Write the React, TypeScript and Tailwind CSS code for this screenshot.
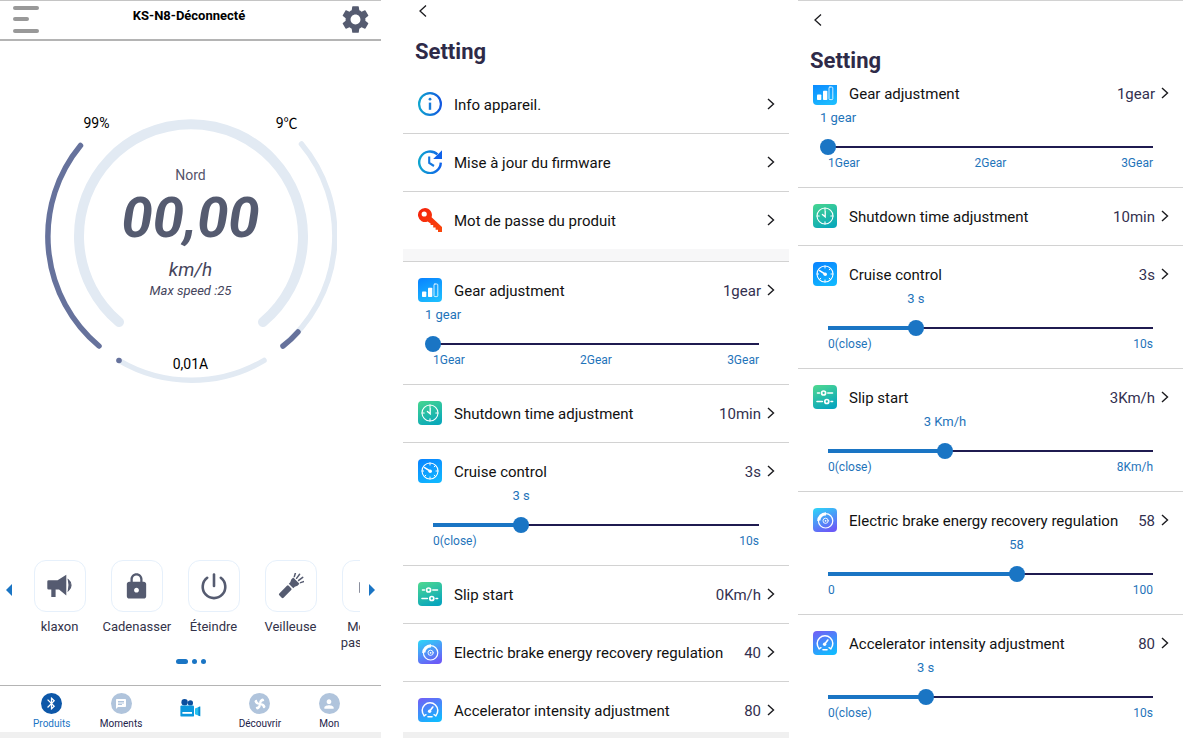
import { useState } from "react";
import type { ReactNode } from "react";
import { MdBluetooth, MdChat, MdLock, MdPerson, MdSettings } from "react-icons/md";

interface SliderInfo {
    label: string;
    level: number;
    marks: string[];
}

interface Setting {
    name: string;
    icon: ReactNode;
    value?: string;
    slider?: SliderInfo;
}

/* ---------- icons ---------- */

interface TileProps {
    id: string;
    from: string;
    to: string;
    children: ReactNode;
}

function Tile({ id, from, to, children }: TileProps) {
    return (
        <svg viewBox="0 0 24 24" className="h-6 w-6" fill="none" stroke="white" strokeLinecap="round">
            <defs>
                <linearGradient id={id} x1="0.2" y1="0" x2="0.6" y2="1">
                    <stop offset="0" stopColor={from} />
                    <stop offset="1" stopColor={to} />
                </linearGradient>
            </defs>
            <rect width="24" height="24" rx="4" fill={`url(#${id})`} stroke="none" />
            {children}
        </svg>
    );
}

const GearTile = () => (
    <Tile id="gear" from="#0a86ff" to="#1cbcff">
        <rect x="4" y="13.5" width="4.3" height="5.5" rx="0.8" fill="white" stroke="none" />
        <rect x="10" y="9.7" width="4.3" height="9.3" rx="0.8" fill="white" stroke="none" />
        <rect x="16" y="6" width="3.8" height="12.6" rx="0.9" strokeWidth="0.8" />
    </Tile>
);

const ClockTile = () => (
    <Tile id="clock" from="#43d392" to="#0aa9b9">
        <circle cx="12" cy="12" r="8" strokeWidth="1.1" />
        <path d="M12 4v2.2M12 17.8V20M4 12h2.2M17.8 12H20" strokeWidth="1.1" />
        <path d="M12.2 7.2v5.6L9.4 10.4" strokeWidth="1.3" />
    </Tile>
);

const CruiseTile = () => (
    <Tile id="cruise" from="#0a86ff" to="#10b6ff">
        <circle cx="12" cy="12" r="8" strokeWidth="1.1" />
        <path d="M12 4v2M12 18v2M4 12h1.6M18 12h2M6.5 17.5l1.3-1.3M17.5 17.5l-1.3-1.3M17.5 6.5l-1.3 1.3" strokeWidth="1" />
        <path d="M12 12L6.6 8.6" strokeWidth="1.5" />
        <circle cx="12.2" cy="12.2" r="1.8" fill="white" stroke="none" />
    </Tile>
);

const SlipTile = () => (
    <Tile id="slip" from="#4bd692" to="#08a6bd">
        <path d="M4.5 8h2M14.8 8h4.7M4 16.5h5.4M18 16.5h1.6" strokeWidth="1.6" />
        <circle cx="10.6" cy="8" r="2" strokeWidth="1.7" />
        <circle cx="13.8" cy="16.5" r="2" strokeWidth="1.7" />
    </Tile>
);

const BrakeTile = () => (
    <Tile id="brake" from="#30d0f8" to="#6b5bf7">
        <circle cx="12.6" cy="12.8" r="7.2" strokeWidth="1.2" />
        <circle cx="12.6" cy="12.8" r="2.6" strokeWidth="0.9" />
        <circle cx="12.6" cy="12.8" r="0.9" fill="white" stroke="none" />
        <path d="M4.2 13A8.6 8.6 0 0 1 13 4.2V7.6A5.2 5.2 0 0 0 7.4 12.4z" fill="white" stroke="none" />
    </Tile>
);

const AccelTile = () => (
    <Tile id="accel" from="#6f62f6" to="#12b9ff">
        <path d="M6.2 17.8A7.8 7.8 0 1 1 17.8 17.8" strokeWidth="1.5" />
        <path d="M6.2 17.8L8 16.6M17.8 17.8L16 16.6" strokeWidth="1.3" />
        <path d="M11.8 13L14.8 9" strokeWidth="1.6" />
        <circle cx="11.6" cy="13.2" r="1.7" fill="white" stroke="none" />
        <path d="M10 18.8h4" strokeWidth="1.6" />
    </Tile>
);

const InfoIcon = () => (
    <svg viewBox="0 0 24 24" className="h-6 w-6" fill="none">
        <defs>
            <linearGradient id="info" x1="0" y1="0" x2="1" y2="0">
                <stop offset="0" stopColor="#0fa4cf" />
                <stop offset="1" stopColor="#1257e0" />
            </linearGradient>
        </defs>
        <circle cx="12" cy="12" r="10.9" stroke="url(#info)" strokeWidth="2.2" />
        <path d="M12 10.6v7.2" stroke="#1a7cd8" strokeWidth="2.4" />
        <circle cx="12" cy="7.2" r="1.4" fill="#1a7cd8" />
    </svg>
);

const UpdateIcon = () => (
    <svg viewBox="0 0 24 24" className="h-6 w-6" fill="none">
        <defs>
            <linearGradient id="update" x1="0" y1="0" x2="1" y2="0">
                <stop offset="0" stopColor="#0fa4cf" />
                <stop offset="1" stopColor="#0f62ea" />
            </linearGradient>
        </defs>
        <path d="M19.4 4.4A10.8 10.8 0 1 0 22.8 12.6" stroke="url(#update)" strokeWidth="2.4" />
        <path d="M24 0.3V9H15.2z" fill="#0f62ea" />
        <path d="M11.2 6.5V13l4.8 3" stroke="#1477e0" strokeWidth="2.1" />
    </svg>
);

const KeyIcon = () => (
    <svg viewBox="0 0 24 24" className="h-6 w-6">
        <defs>
            <linearGradient id="key" x1="0" y1="0" x2="1" y2="1">
                <stop offset="0" stopColor="#f5200c" />
                <stop offset="1" stopColor="#f9480c" />
            </linearGradient>
        </defs>
        <path
            fill="url(#key)"
            fillRule="evenodd"
            d="M7 0a7 7 0 0 1 6.6 9.2L24 19V24H20V21.8H17.6V19.4H15.2V17H12.6V15.5L9.6 13.5A7 7 0 1 1 7 0zM6.2 3.4a2.6 2.6 0 1 0 0 5.2a2.6 2.6 0 0 0 0-5.2z"
        />
    </svg>
);

const HornIcon = () => (
    <svg viewBox="0 0 26 24" className="h-6 w-[26px]" fill="#555b70">
        <path d="M1.6 6.2h9L19.3 0.8v20.7L12 15.6H8.6V23H4.3V15.6H1.6A1.3 1.3 0 0 1 .3 14.3V7.5A1.3 1.3 0 0 1 1.6 6.2z" />
        <path d="M21.4 6a6.5 6.5 0 0 1 0 10.4q1.4-5.2 0-10.4z" stroke="#555b70" strokeWidth="1.2" />
    </svg>
);

const PowerIcon = () => (
    <svg viewBox="0 0 28 28" className="h-7 w-7" fill="none" stroke="#555b70" strokeWidth="2.6" strokeLinecap="round">
        <path d="M7.2 5.8a11.3 11.3 0 1 0 13.6 0" />
        <path d="M14 2.5v11.5" />
    </svg>
);

const TorchIcon = () => (
    <svg viewBox="0 0 26 26" className="h-[26px] w-[26px]" fill="#555b70">
        <g transform="translate(2.5 23.5) rotate(-45)">
            <rect x="0" y="-3" width="13.4" height="6" rx="1.3" />
            <path d="M14.9-3.2L17-3.2L19.6-4.4H22.4V4.4H19.6L17 3.2H14.9z" />
            <path d="M24-4.4l3.4-1.8M24.2-1.5l5-.7M24.2 1.5l5 .7M24 4.4l3.4 1.8" stroke="#555b70" strokeWidth="1.5" strokeLinecap="round" />
        </g>
    </svg>
);

const PassIcon = () => (
    <svg viewBox="0 0 20 24" className="h-6 w-5" fill="none" stroke="#8b8f9e" strokeWidth="1.6">
        <rect x="1.8" y="9" width="16.4" height="9" />
        <path d="M6 9V6a4 4 0 0 1 8 0v3" />
    </svg>
);

const CameraIcon = () => (
    <svg viewBox="0 0 21 18" className="h-[18px] w-[21px]">
        <circle cx="4.6" cy="3.2" r="3.2" fill="#0b4f9e" />
        <circle cx="10.4" cy="3.9" r="2.6" fill="#0b4f9e" />
        <rect x="0.4" y="6.4" width="13.6" height="11.2" rx="1.2" fill="#0b97dd" />
        <rect x="2.4" y="13" width="9.6" height="1.8" fill="white" />
        <path d="M15 9.4L20.2 7.4v9.8L15 15.2z" fill="#27c0ee" />
        <path d="M18.4 8.1L20.2 7.4v9.8l-1.8-.7z" fill="#0b87d0" />
    </svg>
);

const FanIcon = () => (
    <svg viewBox="0 0 16 16" className="h-[14px] w-[14px]" fill="white">
        {[15, 105, 195, 285].map((angle) => (
            <path key={angle} d="M8 9.2C6 7 5.8 3.4 9 1.2C10.4 1 11.8 2.2 11.6 3.4C9.8 4.2 9 5.4 9 7.4z" transform={`rotate(${angle} 8 8)`} />
        ))}
    </svg>
);

const Chevron = () => (
    <svg viewBox="0 0 8 12" className="h-3 w-2 shrink-0" fill="none" stroke="#1b1b1f" strokeWidth="1.4">
        <path d="M1 1l5.5 5L1 11" />
    </svg>
);

/* ---------- data ---------- */

const infoRows: Setting[] = [
    { name: "Info appareil.", icon: <InfoIcon /> },
    { name: "Mise à jour du firmware", icon: <UpdateIcon /> },
    { name: "Mot de passe du produit", icon: <KeyIcon /> },
];

const gearSlider: SliderInfo = { label: "1 gear", level: 0, marks: ["1Gear", "2Gear", "3Gear"] };
const cruiseSlider: SliderInfo = { label: "3 s", level: 27, marks: ["0(close)", "10s"] };

const firstSettings: Setting[] = [
    { name: "Gear adjustment", icon: <GearTile />, value: "1gear", slider: gearSlider },
    { name: "Shutdown time adjustment", icon: <ClockTile />, value: "10min" },
    { name: "Cruise control", icon: <CruiseTile />, value: "3s", slider: cruiseSlider },
    { name: "Slip start", icon: <SlipTile />, value: "0Km/h" },
    { name: "Electric brake energy recovery regulation", icon: <BrakeTile />, value: "40" },
    { name: "Accelerator intensity adjustment", icon: <AccelTile />, value: "80" },
];

const secondSettings: Setting[] = [
    { name: "Gear adjustment", icon: <GearTile />, value: "1gear", slider: gearSlider },
    { name: "Shutdown time adjustment", icon: <ClockTile />, value: "10min" },
    { name: "Cruise control", icon: <CruiseTile />, value: "3s", slider: cruiseSlider },
    { name: "Slip start", icon: <SlipTile />, value: "3Km/h", slider: { label: "3 Km/h", level: 36, marks: ["0(close)", "8Km/h"] } },
    { name: "Electric brake energy recovery regulation", icon: <BrakeTile />, value: "58", slider: { label: "58", level: 58, marks: ["0", "100"] } },
    { name: "Accelerator intensity adjustment", icon: <AccelTile />, value: "80", slider: { label: "3 s", level: 30, marks: ["0(close)", "10s"] } },
];

const actions = [
    { label: "klaxon", icon: <HornIcon /> },
    { label: "Cadenasser", icon: <MdLock size={29} /> },
    { label: "Éteindre", icon: <PowerIcon /> },
    { label: "Veilleuse", icon: <TorchIcon /> },
    { label: "Mot de passe BT", icon: <PassIcon /> },
];

const tabs = [
    { label: "Produits", icon: <MdBluetooth size={15} /> },
    { label: "Moments", icon: <MdChat size={12} /> },
    { label: "", icon: <CameraIcon /> },
    { label: "Découvrir", icon: <FanIcon /> },
    { label: "Mon", icon: <MdPerson size={14} /> },
];

/* ---------- dashboard ---------- */

function Gauge() {
    return (
        <div className="mx-auto mt-[70px] grid w-[292px]">
            <svg viewBox="0 0 292 274" className="w-full [grid-area:1/1]" fill="none" strokeLinecap="round">
                <path d="M74 211A112 112 0 1 1 218 211" stroke="#e2eaf3" strokeWidth="10" />
                <path d="M35.5 34.5A143 143 0 0 0 54 235" stroke="#66729c" strokeWidth="5.5" />
                <path d="M256.5 33A143 143 0 0 1 238 235" stroke="#e2eaf3" strokeWidth="5.5" />
                <path d="M253 221Q246 229 238 235" stroke="#66729c" strokeWidth="5.5" />
                <path d="M74 249.5A143 143 0 0 0 219 249.5" stroke="#e2eaf3" strokeWidth="5.5" />
                <circle cx="74" cy="249.5" r="2.8" fill="#66729c" />
            </svg>
            <div className="flex flex-col text-center [grid-area:1/1]">
                <div className="mt-1 flex justify-between px-[39px] text-[14px] leading-4 text-black">
                    <span>99%</span>
                    <span>9℃</span>
                </div>
                <p className="mt-9 text-[14px] leading-4 text-[#55556c]">Nord</p>
                <p className="mt-[3px] text-[56px] leading-[64px] font-bold text-[#555b70] italic">00,00</p>
                <p className="mt-2 text-[19px] leading-6 text-[#45455c] italic">km/h</p>
                <p className="mt-px text-[13px] leading-4 text-[#45455c] italic">Max speed :25</p>
                <p className="mt-[57px] text-[14px] leading-4 text-black">0,01A</p>
            </div>
        </div>
    );
}

function Dashboard() {
    const [activeTab, setActiveTab] = useState("Produits");

    return (
        <section className="flex h-full min-w-0 flex-col border-t border-[#c4c4c4]">
            <header className="flex h-10 items-center justify-between border-b-2 border-[#b4b4b4] pr-[9px] pb-[2px] pl-[13px]">
                <button type="button" aria-label="Menu" className="flex h-[27px] w-[26px] flex-col justify-between">
                    <span className="h-1 w-full rounded-full bg-[#999]" />
                    <span className="h-1 w-4 rounded-full bg-[#999]" />
                    <span className="h-1 w-full rounded-full bg-[#999]" />
                </button>
                <h2 className="pb-[6px] text-[13px] leading-4 font-bold text-black">KS-N8-Déconnecté</h2>
                <button type="button" aria-label="Réglages" className="text-[#555b70]">
                    <MdSettings size={33} />
                </button>
            </header>

            <Gauge />

            <div className="mt-auto flex items-start">
                <button type="button" aria-label="Précédent" className="flex h-[60px] w-[21px] shrink-0 items-center pl-[6px]">
                    <svg viewBox="0 0 6 12" className="h-3 w-[6px]" fill="#1a75c4"><path d="M6 0v12L0 6z" /></svg>
                </button>
                <div className="flex min-w-0 grow overflow-hidden">
                    {actions.map((a) => (
                        <button key={a.label} type="button" className="flex w-[77px] shrink-0 flex-col items-center">
                            <span className="flex h-[52px] w-[52px] items-center justify-center rounded-xl border border-[#e6f0fb] text-[#555b70]">
                                {a.icon}
                            </span>
                            <span className="mt-[7px] h-8 max-w-[68px] text-[13px] leading-4 text-[#33334a]">{a.label}</span>
                        </button>
                    ))}
                </div>
                <button type="button" aria-label="Suivant" className="flex h-[60px] w-[21px] shrink-0 items-center justify-end pr-[6px]">
                    <svg viewBox="0 0 6 12" className="h-3 w-[6px]" fill="#1a75c4"><path d="M0 0v12l6-6z" /></svg>
                </button>
            </div>

            <div className="mt-2 mb-[21px] flex justify-center gap-1">
                <span className="h-[5px] w-3 rounded-full bg-[#1a75c4]" />
                <span className="h-[5px] w-[5px] rounded-full bg-[#1a75c4]" />
                <span className="h-[5px] w-[5px] rounded-full bg-[#1a75c4]" />
            </div>

            <nav className="grid h-[47px] grid-cols-5 border-t border-[#b4b4b4] px-[17px] pt-[7px]">
                {tabs.map((t) => (
                    <button
                        key={t.label}
                        type="button"
                        aria-label={t.label || "Caméra"}
                        onClick={() => setActiveTab(t.label)}
                        className="flex flex-col items-center"
                    >
                        {t.label === "" ? (
                            <span className="pt-[6px]">{t.icon}</span>
                        ) : (
                            <>
                                <span className={`flex h-[21px] w-[21px] items-center justify-center rounded-full text-white ${t.label === activeTab ? "bg-[#0d57a8]" : "bg-[#b0c4dc]"}`}>
                                    {t.icon}
                                </span>
                                <span className={`mt-1 text-[10px] leading-3 ${t.label === activeTab ? "text-[#1a75c4]" : "text-[#22224a]"}`}>
                                    {t.label}
                                </span>
                            </>
                        )}
                    </button>
                ))}
            </nav>
            <div className="h-[6px] shrink-0 bg-[#f0f0f0]" />
        </section>
    );
}

/* ---------- settings ---------- */

function Slider({ name, slider }: { name: string; slider: SliderInfo }) {
    const [level, setLevel] = useState(slider.level);

    return (
        <div className="pr-4 pl-[15px] text-[#1f74ba]">
            <div className="mt-[5px] flex text-[13px] leading-4">
                <span className="shrink-0" style={{ width: `${level}%` }} />
                <span className={level === 0 ? "-ml-2" : "flex w-0 justify-center whitespace-nowrap"}>{slider.label}</span>
            </div>
            <div className="mt-[13px] grid items-center">
                <div className="h-[2px] bg-[#1f1b50] [grid-area:1/1]" />
                <div className="h-1 bg-[#1a75c4] [grid-area:1/1]" style={{ width: `${level}%` }} />
                <input
                    type="range"
                    aria-label={name}
                    value={level}
                    onChange={(e) => setLevel(Number(e.target.value))}
                    className="-mx-2 h-4 cursor-pointer appearance-none bg-transparent [grid-area:1/1] [&::-webkit-slider-thumb]:h-4 [&::-webkit-slider-thumb]:w-4 [&::-webkit-slider-thumb]:appearance-none [&::-webkit-slider-thumb]:rounded-full [&::-webkit-slider-thumb]:bg-[#1a75c4]"
                />
            </div>
            <div className="flex justify-between text-[12px] leading-4">
                {slider.marks.map((m) => (
                    <span key={m}>{m}</span>
                ))}
            </div>
        </div>
    );
}

function SettingRow({ setting }: { setting: Setting }) {
    return (
        <li className="border-b border-[#d2d2d2] pt-4 pr-[14px] pb-4 pl-[15px] last:border-b-0">
            <button type="button" className={`flex h-6 w-full items-center text-left text-[15px] ${setting.slider ? "" : "mb-px"}`}>
                {setting.icon}
                <span className="ml-3 grow pt-[2px] whitespace-nowrap text-[#111]">{setting.name}</span>
                <span className="mr-[6px] pt-[2px] text-[#33304f]">{setting.value}</span>
                <Chevron />
            </button>
            {setting.slider && <Slider name={setting.name} slider={setting.slider} />}
        </li>
    );
}

function SettingHeader() {
    return (
        <header className="shrink-0 px-3">
            <button type="button" aria-label="Retour" className="ml-1 block">
                <svg viewBox="0 0 8 14" className="h-[14px] w-2" fill="none" stroke="#1b1b1f" strokeWidth="1.3">
                    <path d="M7 1.5L1 7l6 5.5" />
                </svg>
            </button>
            <h1 className="mt-[19px] text-[22px] leading-[30px] font-bold text-[#2e2a48]">Setting</h1>
        </header>
    );
}

export default function App() {
    return (
        <main className="grid h-screen grid-cols-[381fr_408fr_394fr] grid-rows-1 overflow-hidden bg-white pr-[17px] font-[Roboto,'Noto_Sans_CJK_SC',sans-serif]">
            <Dashboard />

            <section className="ml-[22px] flex h-full min-h-0 min-w-0 flex-col pt-1">
                <SettingHeader />
                <div className="mt-[9px] min-h-0 grow overflow-hidden">
                    <ul>
                        {infoRows.map((s) => (
                            <SettingRow key={s.name} setting={s} />
                        ))}
                    </ul>
                    <ul className="border-t-[12px] border-[#f7f7f8]">
                        <li className="border-t border-[#d2d2d2]" />
                        {firstSettings.map((s) => (
                            <SettingRow key={s.name} setting={s} />
                        ))}
                    </ul>
                </div>
                <div className="h-[6px] shrink-0 bg-[#f0f0f0]" />
            </section>

            <section className="ml-[9px] flex h-full min-h-0 min-w-0 flex-col border-t border-[#d2d2d2] pt-3">
                <SettingHeader />
                <div className="mt-[9px] min-h-0 grow overflow-hidden">
                    <ul className="-mt-5">
                        {secondSettings.map((s) => (
                            <SettingRow key={s.name} setting={s} />
                        ))}
                    </ul>
                </div>
            </section>
        </main>
    );
}
